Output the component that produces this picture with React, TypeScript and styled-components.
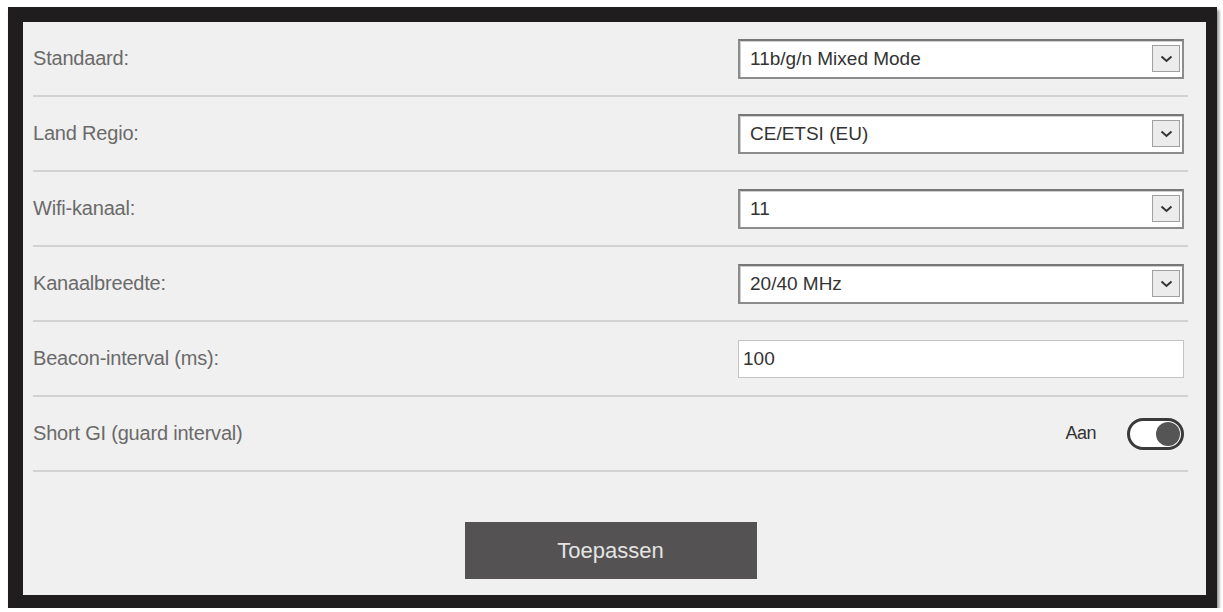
import React from "react";
import styled, { createGlobalStyle } from "styled-components";

const GlobalStyle = createGlobalStyle`
  html, body {
    margin: 0;
    padding: 0;
    background: #fff;
  }
  body {
    font-family: "Liberation Sans", Arial, sans-serif;
  }
`;

const Frame = styled.div`
  box-sizing: border-box;
  width: 1209px;
  height: 601px;
  margin: 7px 0 0 8px;
  border-style: solid;
  border-color: #1f1d1e;
  border-width: 15px 11px 13px 15px;
  box-shadow: 2px 3px 3px rgba(0, 0, 0, 0.45);
  background: #f0f0f0;
`;

const Panel = styled.div`
  height: 100%;
  box-sizing: border-box;
  padding: 0 18px 0 10px;
  display: flex;
  flex-direction: column;
`;

const Row = styled.div`
  height: 75px;
  box-sizing: border-box;
  display: flex;
  align-items: center;
  justify-content: space-between;
  border-bottom: 2px solid #d2d2d2;
  padding: 0 4px 0 0;
`;

const Label = styled.span`
  font-size: 20px;
  color: #6a6a6a;
  letter-spacing: -0.2px;
`;

const Field = styled.div<{ $select?: boolean }>`
  box-sizing: border-box;
  width: 446px;
  height: ${(p) => (p.$select ? "40px" : "38px")};
  display: flex;
  align-items: center;
  justify-content: space-between;
  background: #fff;
  border: ${(p) => (p.$select ? "2px solid #8c8c8c" : "1px solid #c4c4c4")};
  border-top-color: ${(p) => (p.$select ? "#777" : "#c4c4c4")};
  box-shadow: ${(p) => (p.$select ? "inset 1px 1px 0 #cfcfcf" : "none")};
  padding: 0 2px 0 ${(p) => (p.$select ? "10px" : "4px")};
`;

const FieldText = styled.span`
  font-size: 19px;
  color: #333;
`;

const ArrowBox = styled.span`
  box-sizing: border-box;
  width: 28px;
  height: 27px;
  display: flex;
  align-items: center;
  justify-content: center;
  background: #ececec;
  border: 1px solid #a0a0a0;
`;

const ToggleGroup = styled.div`
  display: flex;
  align-items: center;
  gap: 31px;
`;

const ToggleText = styled.span`
  font-size: 18px;
  color: #333;
  letter-spacing: -0.5px;
`;

const Toggle = styled.span`
  box-sizing: border-box;
  width: 57px;
  height: 32px;
  border: 3px solid #3a3a3a;
  border-radius: 16px;
  background: #fff;
  display: flex;
  align-items: center;
  justify-content: flex-end;
  padding-right: 1px;
`;

const Knob = styled.span`
  width: 24px;
  height: 24px;
  border-radius: 50%;
  background: #555;
`;

const Footer = styled.div`
  flex: 1;
  display: flex;
  justify-content: center;
  align-items: flex-start;
  padding-top: 50px;
`;

const ApplyButton = styled.button`
  width: 292px;
  height: 57px;
  border: none;
  background: #545253;
  color: #e4e4e4;
  font-family: "Liberation Sans", Arial, sans-serif;
  font-size: 22px;
  cursor: pointer;
`;

const Chevron = () => (
  <svg width="13" height="8" viewBox="0 0 13 8">
    <polyline points="1.5,1.5 6.5,6 11.5,1.5" fill="none" stroke="#333" strokeWidth="2" />
  </svg>
);

type Setting = { label: string; value: string; kind: "select" | "input" };

const settings: Setting[] = [
  { label: "Standaard:", value: "11b/g/n Mixed Mode", kind: "select" },
  { label: "Land Regio:", value: "CE/ETSI (EU)", kind: "select" },
  { label: "Wifi-kanaal:", value: "11", kind: "select" },
  { label: "Kanaalbreedte:", value: "20/40 MHz", kind: "select" },
  { label: "Beacon-interval (ms):", value: "100", kind: "input" },
];

export default function App() {
  return (
    <>
      <GlobalStyle />
      <Frame>
        <Panel>
          {settings.map((s) => (
            <Row key={s.label}>
              <Label>{s.label}</Label>
              <Field $select={s.kind === "select"}>
                <FieldText>{s.value}</FieldText>
                {s.kind === "select" && (
                  <ArrowBox>
                    <Chevron />
                  </ArrowBox>
                )}
              </Field>
            </Row>
          ))}
          <Row>
            <Label>Short GI (guard interval)</Label>
            <ToggleGroup>
              <ToggleText>Aan</ToggleText>
              <Toggle>
                <Knob />
              </Toggle>
            </ToggleGroup>
          </Row>
          <Footer>
            <ApplyButton>Toepassen</ApplyButton>
          </Footer>
        </Panel>
      </Frame>
    </>
  );
}
